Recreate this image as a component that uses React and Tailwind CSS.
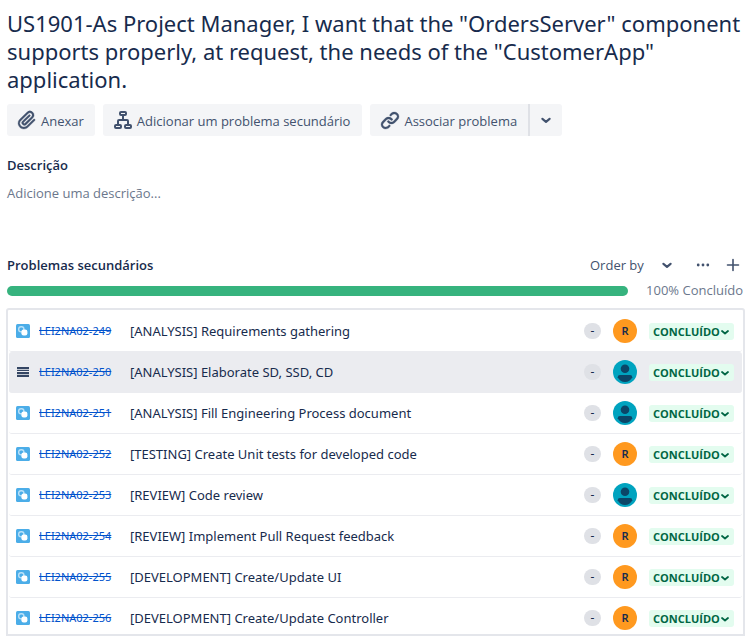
import React from "react";

const ISSUES = [
  { key: "LEI2NA02-249", title: "[ANALYSIS] Requirements gathering", who: "R" },
  { key: "LEI2NA02-250", title: "[ANALYSIS] Elaborate SD, SSD, CD", who: "user", active: true },
  { key: "LEI2NA02-251", title: "[ANALYSIS] Fill Engineering Process document", who: "user" },
  { key: "LEI2NA02-252", title: "[TESTING] Create Unit tests for developed code", who: "R" },
  { key: "LEI2NA02-253", title: "[REVIEW] Code review", who: "user" },
  { key: "LEI2NA02-254", title: "[REVIEW] Implement Pull Request feedback", who: "R" },
  { key: "LEI2NA02-255", title: "[DEVELOPMENT] Create/Update UI", who: "R" },
  { key: "LEI2NA02-256", title: "[DEVELOPMENT] Create/Update Controller", who: "R" },
];

function Chevron({ className }) {
  return (
    <svg viewBox="0 0 10 10" className={className} fill="none" stroke="currentColor" strokeWidth="1.8" strokeLinecap="round" strokeLinejoin="round" aria-hidden="true">
      <path d="M2 4 5 6.5 8 4" />
    </svg>
  );
}

function Paperclip() {
  return (
    <svg viewBox="0 0 24 24" className="size-6 shrink-0" fill="currentColor" stroke="currentColor" strokeWidth="0.3" aria-hidden="true">
      <path d="M11.643 17.965c-1.53 1.495-4.016 1.496-5.542.004a3.773 3.773 0 0 1 .002-5.412l7.147-6.985a2.316 2.316 0 0 1 3.233-.003c.893.873.895 2.282.004 3.153l-6.703 6.55a.653.653 0 0 1-.914-.008.62.62 0 0 1 0-.902l6.229-6.087a.941.941 0 0 0 0-1.353.995.995 0 0 0-1.384 0l-6.23 6.087a2.502 2.502 0 0 0 0 3.607 2.643 2.643 0 0 0 3.683.009l6.703-6.55a4.074 4.074 0 0 0-.003-5.859 4.306 4.306 0 0 0-6.002.003l-7.148 6.985a5.655 5.655 0 0 0-.001 8.118c2.29 2.237 6.015 2.238 8.308-.004l6.862-6.705a.941.941 0 0 0 0-1.354.995.995 0 0 0-1.384 0l-6.86 6.706z" />
    </svg>
  );
}

function Hierarchy() {
  return (
    <svg viewBox="0 0 24 24" className="size-6 shrink-0" fill="none" stroke="currentColor" strokeWidth="2" aria-hidden="true">
      <rect x="9" y="4" width="6" height="3" rx="1" />
      <rect x="4" y="17" width="6" height="3" rx="1" />
      <rect x="14" y="17" width="6" height="3" rx="1" />
      <path d="M12 7v5M7 17v-4q0-1 1-1h8q1 0 1 1v4" />
    </svg>
  );
}

function Link() {
  return (
    <svg viewBox="0 0 24 24" className="size-6 shrink-0" fill="currentColor" stroke="currentColor" strokeWidth="0.3" aria-hidden="true">
      <path d="M12.856 5.457l-.937.92a1.002 1.002 0 0 0 0 1.437 1.047 1.047 0 0 0 1.463 0l.984-.966c.967-.95 2.542-1.135 3.602-.288a2.54 2.54 0 0 1 .203 3.81l-2.903 2.852a2.646 2.646 0 0 1-3.696 0l-1.11-1.09L9 13.57l1.108 1.089c1.822 1.788 4.802 1.788 6.622 0l2.905-2.852a4.558 4.558 0 0 0-.357-6.82c-1.893-1.517-4.695-1.226-6.422.47" />
      <path d="M11.144 19.543l.937-.92a1.002 1.002 0 0 0 0-1.437 1.047 1.047 0 0 0-1.462 0l-.985.966c-.967.95-2.542 1.135-3.602.288a2.54 2.54 0 0 1-.203-3.81l2.903-2.852a2.646 2.646 0 0 1 3.696 0l1.11 1.09L15 11.43l-1.108-1.089c-1.822-1.788-4.802-1.788-6.622 0l-2.905 2.852a4.558 4.558 0 0 0 .357 6.82c1.893 1.517 4.695 1.226 6.422-.47" />
    </svg>
  );
}

function SubtaskIcon() {
  return (
    <svg viewBox="0 0 14 14" className="size-3.5" role="img" aria-label="Subtask">
      <rect width="14" height="14" rx="1.5" fill="#4bade8" />
      <rect x="2.7" y="2.7" width="5.2" height="5.2" rx="2.3" fill="none" stroke="#b9e0f8" strokeWidth="1.4" />
      <rect x="5.4" y="5.6" width="6" height="5.8" rx="2.2" fill="#fff" />
    </svg>
  );
}

function DragIcon() {
  return (
    <svg viewBox="0 0 14 14" className="size-3.5" aria-hidden="true">
      <path d="M1 2h12v2H1zM1 5h12v1H1zM1 7h12v2H1zM1 10h12v2H1z" fill="#344563" />
      <path d="M1 4h12v1H1zM1 9h12v1H1z" fill="#c1c7d0" />
    </svg>
  );
}

function Avatar({ who }) {
  if (who === "R") {
    return (
      <span className="flex size-6 items-center justify-center rounded-full bg-[#ff991f] text-[11px] font-semibold text-[#172b4d]">
        R
      </span>
    );
  }
  return (
    <svg viewBox="0 0 24 24" className="size-6" role="img" aria-label="User">
      <circle cx="12" cy="12" r="12" fill="#00a3bf" />
      <circle cx="12" cy="8.8" r="4.3" fill="#0b4668" />
      <path d="M4.7 17.3q0-2.3 2.3-2.3h10q2.3 0 2.3 2.3Q17 22 12 22T4.7 17.3z" fill="#0b4668" />
    </svg>
  );
}

function IssueRow({ issue }) {
  const base = "flex h-[41px] shrink-0 items-center rounded-[3px] border-b border-[#ebecf0] pr-2 pl-[7px]";
  return (
    <li className={issue.active ? base + " bg-[#ebecf0]" : base}>
      {issue.active ? <DragIcon /> : <SubtaskIcon />}
      <a href={"#" + issue.key} className="ml-[9px] w-[91px] shrink-0 pt-px text-[11px] text-[#0052cc] line-through">
        {issue.key}
      </a>
      <span className="min-w-0 flex-1 truncate pt-px text-[13px] text-[#172b4d]">{issue.title}</span>
      <span className="mr-3 flex h-4 w-[17px] items-center justify-center rounded-full bg-[#dfe1e6] text-xs text-[#172b4d]">
        -
      </span>
      <Avatar who={issue.who} />
      <div className="relative ml-3 text-[#006644]">
        <select
          aria-label={"Status " + issue.key}
          className="block h-[17px] w-[85px] appearance-none rounded-[3px] bg-[#e3fcef] pt-px pl-1 font-['Open_Sans',sans-serif] text-[11px] leading-4 font-bold"
        >
          <option>CONCLUÍDO</option>
        </select>
        <Chevron className="pointer-events-none absolute top-1 right-1 size-[10px]" />
      </div>
    </li>
  );
}

export default function App() {
  const button = "flex h-8 items-center bg-[#f4f5f7] text-[13px] text-[#42526e]";
  return (
    <main className="flex h-screen flex-col overflow-hidden bg-white font-['Open_Sans','Noto_Sans',sans-serif] text-[#172b4d]">
      <h1 className="mt-[9px] pl-[7px] font-['Noto_Sans',sans-serif] text-[22px] leading-7">
        US1901-As Project Manager, I want that the "OrdersServer" component supports properly, at request, the needs of the "CustomerApp" application.
      </h1>

      <div className="mt-[11px] flex gap-2 pl-[7px]">
        <button type="button" className={button + " gap-0.5 rounded-[3px] pr-[11px] pl-2"}>
          <Paperclip />
          <span className="pt-[3px]">Anexar</span>
        </button>
        <button type="button" className={button + " gap-0.5 rounded-[3px] pr-3 pl-2"}>
          <Hierarchy />
          <span className="pt-[3px]">Adicionar um problema secundário</span>
        </button>
        <div className="flex">
          <button type="button" className={button + " gap-0.5 rounded-l-[3px] pr-[11px] pl-2"}>
            <Link />
            <span className="pt-[3px]">Associar problema</span>
          </button>
          <button type="button" aria-label="Mais opções" className={button + " w-[34px] justify-center rounded-r-[3px] border-l-2 border-[#dfe1e6]"}>
            <Chevron className="size-3" />
          </button>
        </div>
      </div>

      <section className="mt-[19px] pl-[7px]">
        <h2 className="text-[13px] leading-5 font-semibold">Descrição</h2>
        <p className="mt-2 text-[13px] leading-5 text-[#6b778c]">Adicione uma descrição...</p>
      </section>

      <section className="mt-[52px] flex min-h-0 flex-1 flex-col">
        <div className="flex h-5 items-center pr-2 pl-[7px] text-[#42526e]">
          <h2 className="flex-1 text-[13px] leading-5 font-semibold text-[#172b4d]">Problemas secundários</h2>
          <div className="relative">
            <select aria-label="Order by" className="block h-5 w-[84px] appearance-none bg-transparent text-[13px] leading-5">
              <option>Order by</option>
            </select>
            <Chevron className="pointer-events-none absolute top-1 right-px size-3" />
          </div>
          <button type="button" aria-label="Mais" className="ml-[22px]">
            <svg viewBox="0 0 14 14" className="size-3.5" fill="currentColor" aria-hidden="true">
              <circle cx="2.2" cy="7" r="1.4" />
              <circle cx="7" cy="7" r="1.4" />
              <circle cx="11.8" cy="7" r="1.4" />
            </svg>
          </button>
          <button type="button" aria-label="Adicionar" className="ml-4">
            <svg viewBox="0 0 14 14" className="size-3.5" stroke="currentColor" strokeWidth="1.6" strokeLinecap="round" aria-hidden="true">
              <path d="M7 1.5v11M1.5 7h11" />
            </svg>
          </button>
        </div>

        <div className="mt-[6px] flex h-5 items-center gap-[18px] pr-[5px] pl-[7px]">
          <div role="progressbar" aria-label="Progresso" aria-valuenow={100} className="h-[10px] flex-1 rounded-full bg-[#36b37e]" />
          <span className="text-[13px] text-[#6b778c]">100% Concluído</span>
        </div>

        <ul className="mt-[7px] mr-[3px] ml-[6px] flex min-h-0 flex-1 flex-col overflow-hidden rounded-t-[3px] border-2 border-[#e4e6eb] px-px pt-px font-['Noto_Sans',sans-serif]">
          {ISSUES.map((issue) => (
            <IssueRow key={issue.key} issue={issue} />
          ))}
        </ul>
      </section>
    </main>
  );
}
